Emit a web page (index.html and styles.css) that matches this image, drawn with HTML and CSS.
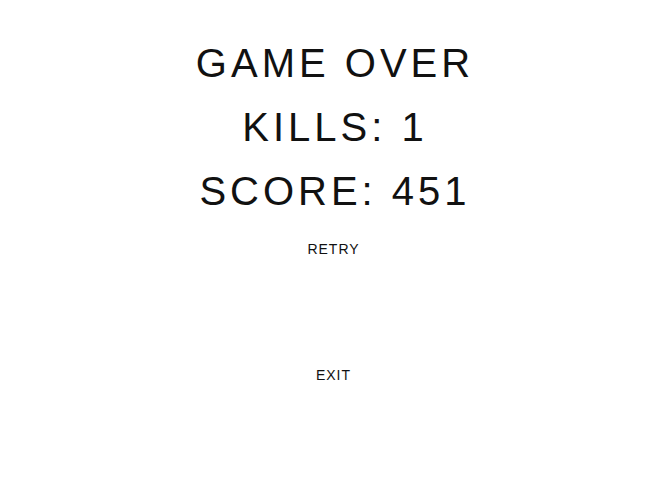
FILE: index.html
```html
<!DOCTYPE html>
<html lang="en">
<head>
  <meta charset="UTF-8" />
  <meta name="viewport" content="width=device-width, initial-scale=1.0" />
  <title>Game Over</title>
  <link rel="stylesheet" href="styles.css">
</head>
<body>
  <div class="game-over">
    <div class="results">
      <div class="result-line">GAME OVER</div>
      <div class="result-line">KILLS: 1</div>
      <div class="result-line">SCORE: 451</div>
    </div>
    <div class="menu">
      <button class="menu-btn">RETRY</button>
      <button class="menu-btn">EXIT</button>
    </div>
  </div>
</body>
</html>
```

FILE: styles.css
```css
body {
  margin: 0;
  background-color: #fff;
  color: #111;
  font-family: "Liberation Sans", Arial, sans-serif;
}
.game-over {
  display: flex;
  flex-direction: column;
  align-items: center;
  padding-top: 31px;
}
.results {
  display: flex;
  flex-direction: column;
  align-items: center;
}
.result-line {
  font-size: 40px;
  line-height: 64px;
  letter-spacing: 4px;
  margin-right: -4px;
}
.menu {
  display: flex;
  flex-direction: column;
  align-items: center;
  gap: 106px;
  margin-top: 16px;
}
.menu-btn {
  background: none;
  border: none;
  padding: 0;
  font-family: inherit;
  font-size: 14px;
  line-height: 20px;
  letter-spacing: 1px;
  margin-right: -1px;
  color: #111;
  cursor: pointer;
}
```
